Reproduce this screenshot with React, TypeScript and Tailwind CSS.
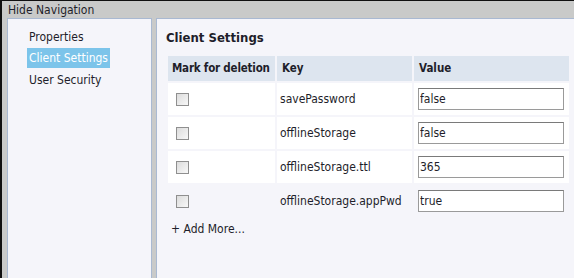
import React from "react";

const rows = [
  { key: "savePassword", value: "false" },
  { key: "offlineStorage", value: "false" },
  { key: "offlineStorage.ttl", value: "365" },
  { key: "offlineStorage.appPwd", value: "true" },
];

const Checkbox: React.FC = () => (
  <span className="block w-[13px] h-[13px] border border-[#8f8f8f] bg-gradient-to-br from-[#dcdcdc] to-[#f8f8f8]" />
);

const App: React.FC = () => {
  return (
    <div className="w-[574px] h-[278px] overflow-hidden flex flex-col bg-[#c9cac9] border-l-2 border-t border-[#101010] font-['DejaVu_Sans_Condensed','Liberation_Sans',sans-serif] text-[12px] text-[#1e1e2a]">
      <div className="h-[17px] flex items-center pl-[6px] shrink-0">Hide Navigation</div>

      <div className="flex flex-1 pl-[5px] gap-[4px]">
        {/* sidebar */}
        <div className="w-[145px] bg-[#f5f5fa] border-l border-r border-t border-[#a9b9d2] pt-[7px] pl-[19px] flex flex-col items-start">
          <div className="h-[22px] flex items-center px-[2px]">Properties</div>
          <div className="h-[20px] flex items-center px-[2px] bg-[#7cc4ea] text-white">Client Settings</div>
          <div className="h-[24px] flex items-center px-[2px]">User Security</div>
        </div>

        {/* main */}
        <div className="flex-1 bg-[#f5f5fa] border-l border-t border-[#a9b9d2] pl-[9px] pr-[4px]">
          <div className="h-[37px] flex items-center font-bold text-[13px] pt-[1px]">Client Settings</div>

          <div className="grid grid-cols-[107px_135px_155px] gap-x-[2px] gap-y-[2px] ml-[2px]">
            <div className="h-[25px] bg-[#dde5ef] flex items-center pl-[4px] font-bold text-[11.5px] whitespace-nowrap tracking-[-0.2px]">Mark for deletion</div>
            <div className="h-[25px] bg-[#dde5ef] flex items-center pl-[5px] font-bold text-[11.5px]">Key</div>
            <div className="h-[25px] bg-[#dde5ef] flex items-center pl-[5px] font-bold text-[11.5px]">Value</div>

            {rows.map((r, i) => {
              const bg = i < 3 ? "bg-white" : "";
              return (
                <React.Fragment key={r.key}>
                  <div className={`h-[32px] flex items-center pl-[8px] ${bg}`}>
                    <Checkbox />
                  </div>
                  <div className={`h-[32px] flex items-center pl-[3px] ${bg}`}>{r.key}</div>
                  <div className={`h-[32px] flex items-center pl-[4px] ${bg}`}>
                    <input
                      readOnly
                      value={r.value}
                      className="w-[146px] h-[22px] border border-[#9a9a9a] border-t-[#7a7a7a] bg-white px-[1px] text-[12px] outline-none font-['DejaVu_Sans_Condensed','Liberation_Sans',sans-serif] text-[#1e1e2a]"
                    />
                  </div>
                </React.Fragment>
              );
            })}
          </div>

          <div className="mt-[3px] pl-[5px] h-[18px] flex items-center">+ Add More...</div>
        </div>
      </div>
    </div>
  );
};

export default App;
